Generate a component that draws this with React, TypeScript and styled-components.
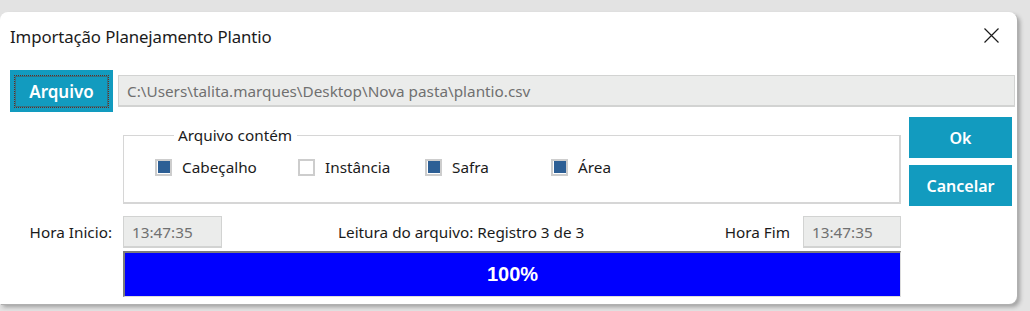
import React from "react";
import styled, { createGlobalStyle } from "styled-components";

const Global = createGlobalStyle`
  html, body { margin: 0; padding: 0; }
  body {
    background: #e3e3e3;
    font-family: "Noto Sans", "Open Sans", sans-serif;
    width: 1030px;
    height: 311px;
    overflow: hidden;
  }
`;

const Screen = styled.div`
  padding-top: 12px;
  width: 1030px;
  height: 311px;
  box-sizing: border-box;
`;

const Dialog = styled.div`
  width: 1017px;
  height: 292px;
  background: #ffffff;
  border-radius: 8px 8px 8px 0;
  box-shadow: 1px 1px 0 #b0b0b0, 3px 3px 4px rgba(0, 0, 0, 0.3);
  display: flex;
  flex-direction: column;
`;

const TitleBar = styled.div`
  height: 49px;
  display: flex;
  align-items: center;
  justify-content: space-between;
  padding: 0 18px 0 10px;
`;

const Title = styled.span`
  font-size: 16.8px;
  color: #1b1b1b;
  letter-spacing: -0.1px;
`;

const CloseButton = styled.button`
  width: 16px;
  height: 16px;
  padding: 0;
  border: none;
  background: transparent;
  display: flex;
  align-items: center;
  justify-content: center;
  margin-top: -2px;
`;

const TopRow = styled.div`
  margin-top: 9px;
  display: flex;
  align-items: center;
  gap: 5px;
  padding: 0 2px 0 10px;
`;

const TealButton = styled.button<{ $focused?: boolean }>`
  width: 103px;
  height: ${(p) => (p.$focused ? 42 : 41)}px;
  background: #129bbf;
  border: none;
  color: #ffffff;
  font-family: "Noto Sans", sans-serif;
  font-weight: 600;
  font-size: ${(p) => (p.$focused ? 17 : 16)}px;
  position: relative;
  padding: 0;
  display: flex;
  align-items: center;
  justify-content: center;
  &::after {
    content: "";
    display: ${(p) => (p.$focused ? "block" : "none")};
    position: absolute;
    inset: 5px 4px 4px 4px;
    border: 1px dotted #6b2a1e;
    box-shadow: inset 0 0 0 1px rgba(107, 42, 30, 0.35);
  }
`;

const Field = styled.div<{ $width?: number }>`
  height: 32px;
  ${(p) => (p.$width ? `width: ${p.$width}px;` : "flex: 1;")}
  box-sizing: border-box;
  background: #ebeceb;
  border: 1px solid #d2d3d2;
  border-bottom-width: 2px;
  color: #707070;
  font-size: 15.3px;
  display: flex;
  align-items: center;
  padding: 0 0 0 8px;
  white-space: nowrap;
`;

const Main = styled.div`
  margin-top: 5px;
  display: grid;
  grid-template-columns: 123px 778px 111px;
  grid-template-rows: auto auto auto;
`;

const Group = styled.fieldset`
  grid-column: 2;
  grid-row: 1;
  margin: 11px 0 0 0;
  padding: 0;
  border: 1px solid #d6d6d6;
  border-width: 1px 2px 2px 1px;
  height: 76px;
  box-sizing: border-box;
  min-width: 0;
`;

const Legend = styled.legend`
  margin-left: 50px;
  padding: 0 5px 0 4px;
  font-size: 15.3px;
  color: #1b1b1b;
  line-height: 14px;
`;

const CheckRow = styled.div`
  display: grid;
  grid-template-columns: 143px 127px 126px auto;
  padding: 15px 0 0 31px;
`;

const CheckItem = styled.label`
  display: flex;
  align-items: center;
  gap: 10px;
  font-size: 15.3px;
  color: #1b1b1b;
`;

const Box = styled.span<{ $checked: boolean }>`
  width: 17px;
  height: 17px;
  box-sizing: border-box;
  border: 2px solid #cdcdcd;
  background: #ffffff;
  padding: 0.5px;
  display: flex;
  &::before {
    content: "";
    flex: 1;
    background: ${(p) => (p.$checked ? "#2d5f95" : "transparent")};
  }
`;

const ButtonStack = styled.div`
  grid-column: 3;
  grid-row: 1;
  padding-left: 8px;
  display: flex;
  flex-direction: column;
  gap: 7px;
`;

const RowLabel = styled.div`
  grid-column: 1;
  grid-row: 2;
  margin-top: 10px;
  height: 32px;
  display: flex;
  align-items: center;
  justify-content: flex-end;
  padding-right: 11px;
  font-size: 15.3px;
  color: #1b1b1b;
`;

const TimeRow = styled.div`
  grid-column: 2;
  grid-row: 2;
  margin-top: 10px;
  display: flex;
  align-items: center;
  height: 32px;
`;

const Status = styled.span`
  margin-left: 116px;
  flex: 1;
  font-size: 15.3px;
  color: #1b1b1b;
`;

const EndLabel = styled.span`
  font-size: 15.3px;
  color: #1b1b1b;
  margin-right: 13px;
`;

const Progress = styled.div`
  grid-column: 2;
  grid-row: 3;
  margin-top: 3px;
  height: 46px;
  box-sizing: border-box;
  background: #0000ff;
  border-top: 2px solid #7d7d7d;
  border-left: 2px solid #7d7d7d;
  border-bottom: 1px solid #dcdcdc;
  border-right: 1px solid #dcdcdc;
  display: flex;
  align-items: center;
  justify-content: center;
  color: #ffffff;
  font-family: "Liberation Sans", Arial, sans-serif;
  font-weight: bold;
  font-size: 20px;
`;

const checks = [
  { label: "Cabeçalho", checked: true },
  { label: "Instância", checked: false },
  { label: "Safra", checked: true },
  { label: "Área", checked: true },
];

export default function App() {
  return (
    <>
      <Global />
      <Screen>
        <Dialog>
          <TitleBar>
            <Title>Importação Planejamento Plantio</Title>
            <CloseButton aria-label="Fechar">
              <svg width="15" height="15" viewBox="0 0 15 15">
                <path d="M0.5 0.5 L14.5 14.5 M14.5 0.5 L0.5 14.5" stroke="#1b1b1b" strokeWidth="1.2" fill="none" />
              </svg>
            </CloseButton>
          </TitleBar>
          <TopRow>
            <TealButton $focused>Arquivo</TealButton>
            <Field>C:\Users\talita.marques\Desktop\Nova pasta\plantio.csv</Field>
          </TopRow>
          <Main>
            <Group>
              <Legend>Arquivo contém</Legend>
              <CheckRow>
                {checks.map((c) => (
                  <CheckItem key={c.label}>
                    <Box $checked={c.checked} />
                    {c.label}
                  </CheckItem>
                ))}
              </CheckRow>
            </Group>
            <ButtonStack>
              <TealButton>Ok</TealButton>
              <TealButton>Cancelar</TealButton>
            </ButtonStack>
            <RowLabel>Hora Inicio:</RowLabel>
            <TimeRow>
              <Field $width={99}>13:47:35</Field>
              <Status>Leitura do arquivo: Registro 3 de 3</Status>
              <EndLabel>Hora Fim</EndLabel>
              <Field $width={98}>13:47:35</Field>
            </TimeRow>
            <Progress>100%</Progress>
          </Main>
        </Dialog>
      </Screen>
    </>
  );
}
